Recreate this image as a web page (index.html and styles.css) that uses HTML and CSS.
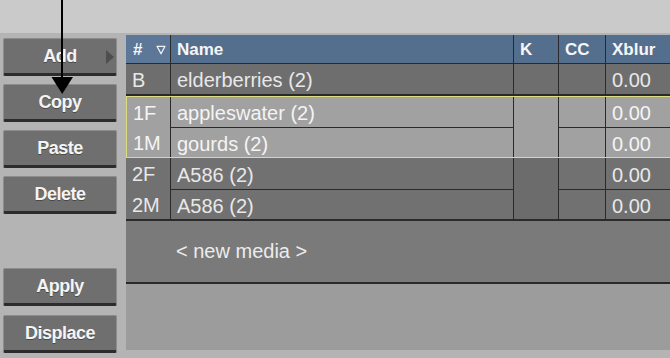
FILE: index.html
```html
<!DOCTYPE html>
<html>
<head>
<meta charset="utf-8">
<link rel="stylesheet" href="styles.css">
</head>
<body>
<div class="screen">
  <div class="topband"></div>
  <div class="main">
    <div class="tools">
      <div class="btn-group">
        <div class="btn btn-more">Add<span class="more"></span></div>
        <div class="btn">Copy</div>
        <div class="btn">Paste</div>
        <div class="btn">Delete</div>
      </div>
      <div class="btn-group bottom">
        <div class="btn">Apply</div>
        <div class="btn">Displace</div>
      </div>
    </div>
    <div class="table">
      <div class="head">
        <div class="hcell hnum"><span>#</span>
          <svg class="sort" width="10" height="10" viewBox="0 0 10 10"><path d="M1 1.3 H9 L5 8.8 Z" fill="none" stroke="#f2f2f2" stroke-width="1.3" stroke-linejoin="round"/></svg>
        </div>
        <div class="hcell">Name</div>
        <div class="hcell">K</div>
        <div class="hcell">CC</div>
        <div class="hcell">Xblur</div>
      </div>
      <div class="group single">
        <div class="cell">B</div>
        <div class="cell">elderberries (2)</div>
        <div class="cell"></div>
        <div class="cell"></div>
        <div class="cell">0.00</div>
      </div>
      <div class="group pair selected">
        <div class="cell num span2"><span>1F</span><span>1M</span></div>
        <div class="cell">appleswater (2)</div>
        <div class="cell span2 k"></div>
        <div class="cell"></div>
        <div class="cell">0.00</div>
        <div class="cell">gourds (2)</div>
        <div class="cell"></div>
        <div class="cell">0.00</div>
      </div>
      <div class="group pair plain">
        <div class="cell num span2"><span>2F</span><span>2M</span></div>
        <div class="cell">A586 (2)</div>
        <div class="cell span2 k"></div>
        <div class="cell"></div>
        <div class="cell">0.00</div>
        <div class="cell">A586 (2)</div>
        <div class="cell"></div>
        <div class="cell">0.00</div>
      </div>
      <div class="newmedia">&lt; new media &gt;</div>
      <div class="empty"></div>
    </div>
  </div>
  <svg class="arrow" width="80" height="100" viewBox="0 0 80 100">
    <rect x="61" y="0" width="2" height="80" fill="#000"/>
    <path d="M51.5 77 H73 L62.2 94 Z" fill="#000"/>
  </svg>
</div>
</body>
</html>
```

FILE: styles.css
```css
* { box-sizing: border-box; }
html, body { margin: 0; padding: 0; }
body {
  width: 670px;
  height: 358px;
  overflow: hidden;
  font-family: "Liberation Sans", Arial, sans-serif;
  background: #b4b4b4;
}
.screen {
  position: relative;
  width: 670px;
  height: 358px;
  display: flex;
  flex-direction: column;
}
.topband {
  height: 33px;
  background: #cacaca;
  flex: none;
}
.main {
  flex: 1;
  display: flex;
  background: #b4b4b4;
}
.tools {
  width: 126px;
  flex: none;
  display: flex;
  flex-direction: column;
  padding: 5px 0 5px 3px;
}
.btn-group {
  display: flex;
  flex-direction: column;
  gap: 8px;
}
.btn-group.bottom {
  margin-top: auto;
  gap: 9px;
}
.btn {
  position: relative;
  width: 114px;
  height: 38px;
  background: #6f6f6f;
  border: 1px solid #8c8c8c;
  border-bottom: 3px solid #2c2c2c;
  border-radius: 2px;
  color: #f4f4f4;
  font-weight: bold;
  font-size: 18px;
  letter-spacing: -0.5px;
  display: flex;
  align-items: center;
  justify-content: center;
  padding-top: 1px;
  text-shadow: 0 1px 0 #4a4a4a;
}
.more {
  position: absolute;
  right: 2px;
  top: 11px;
  width: 0;
  height: 0;
  border-top: 7px solid transparent;
  border-bottom: 7px solid transparent;
  border-left: 8px solid #4e4e4e;
}
.table {
  flex: 1;
  margin: 2px 0 8px 0;
  display: flex;
  flex-direction: column;
  background: #9c9c9c;
  color: #e8e8e8;
  font-size: 20px;
}
.head, .group {
  display: grid;
  grid-template-columns: 44px 342px 44px 46px 1fr;
  column-gap: 1px;
  background: #2a2a2a;
}
.head {
  height: 29px;
  border-bottom: 1px solid #2a2a2a;
}
.hcell {
  background: #546e8e;
  color: #f6f6f6;
  font-weight: bold;
  font-size: 17px;
  display: flex;
  align-items: center;
  padding-left: 6px;
  padding-top: 1px;
}
.hnum {
  background: #5c7797;
  justify-content: space-between;
  padding-left: 7px;
  padding-right: 4px;
}
.sort { margin-top: 1px; }
.cell {
  display: flex;
  align-items: center;
  padding-left: 6px;
  padding-top: 3px;
  background: #6e6e6e;
  white-space: nowrap;
}
.group.single {
  height: 32px;
  border-bottom: 2px solid #2a2a2a;
}
.group.pair {
  row-gap: 1px;
}
.span2 { grid-row: span 2; }
.num {
  flex-direction: column;
  align-items: flex-start;
  justify-content: space-between;
  padding: 0 0 0 6px;
}
.num span {
  height: 30px;
  display: flex;
  align-items: center;
  padding-top: 3px;
}
.selected {
  grid-template-rows: 30px 29px;
  height: 62px;
  border: 1px solid #dcdc80;
  border-right: none;
  grid-template-columns: 43px 342px 44px 46px 1fr;
}
.selected .cell { background: #a1a1a1; color: #f4f4f4; }
.plain {
  grid-template-rows: 31px 29px;
  height: 63px;
  border-bottom: 2px solid #2a2a2a;
}
.plain .cell { background: #717171; }
.plain .k { background: #6c6c6c; }
.newmedia {
  height: 63px;
  background: #7a7a7a;
  border-bottom: 2px solid #2a2a2a;
  display: flex;
  align-items: center;
  padding-left: 50px;
  padding-bottom: 1px;
  color: #ececec;
}
.empty {
  flex: 1;
  background: #9c9c9c;
}
.arrow {
  position: absolute;
  left: 0;
  top: 0;
}
```
